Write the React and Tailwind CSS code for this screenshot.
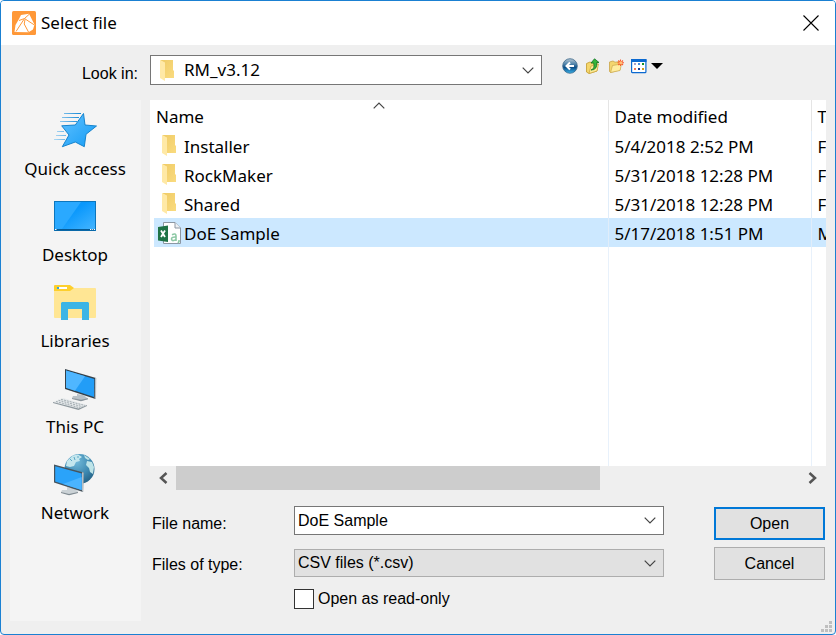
import React, { useState } from "react";

const ui = "font-['Noto_Sans','Segoe_UI',sans-serif]";

function AppLogo() {
  return (
    <svg width="24" height="24" viewBox="0 0 24 24" aria-hidden="true">
      <rect width="24" height="24" rx="1.5" fill="#ff9838" />
      <path d="M9 4 17 2.8 22.5 13.5 21 18.5 16.5 21.3 2.5 21 3.5 14 7 8Z" fill="#fff" />
      <path d="M7 9.5 12.5 7.5 17.5 3M12.5 7.5 17 10.5 22.5 14M12.5 7.5 4 20.5M13 8.5 12.2 13 16.5 21" fill="none" stroke="#ff9838" strokeWidth="1" />
    </svg>
  );
}

function FolderIcon() {
  return (
    <svg width="14" height="22" viewBox="0 0 14 22" className="shrink-0" aria-hidden="true">
      <defs>
        <linearGradient id="folderBack" x1="0" x2="1" y1="0" y2="1">
          <stop offset="0" stopColor="#efcb66" />
          <stop offset="1" stopColor="#fadb7f" />
        </linearGradient>
      </defs>
      <path d="M0 0H13V10L14 11V18H4V3Z" fill="url(#folderBack)" />
      <path d="M0 0 5 2.5V21L0 18Z" fill="#ffe9a6" />
    </svg>
  );
}

function CsvIcon() {
  return (
    <svg width="23" height="22" viewBox="0 0 23 22" className="shrink-0" aria-hidden="true">
      <path d="M5.5.5H17L22.5 6V21.5H5.5Z" fill="#fff" stroke="#8c97a3" />
      <path d="M17 .5V6H22.5" fill="#eef1f4" stroke="#8c97a3" />
      <path d="M0 5 10 3.5V20L0 18.5Z" fill="#1f7346" />
      <path d="M3 8.5 7 15M7 8.5 3 15" stroke="#fff" strokeWidth="1.8" />
      <path d="M14 12.7Q18 10.8 18 14V19M18 15Q13.3 14.7 13.5 17.2Q14 20 18 17.3M21 18V19.5L20 21" fill="none" stroke="#8cc8a4" strokeWidth="1.6" />
    </svg>
  );
}

function Chevron() {
  return (
    <svg width="12" height="7" viewBox="0 0 12 7" fill="none" aria-hidden="true">
      <path d="M.7.7 6 6 11.3.7" stroke="#444" strokeWidth="1.2" />
    </svg>
  );
}

function StarIcon() {
  return (
    <svg width="44" height="42" viewBox="0 0 44 42" aria-hidden="true">
      <defs>
        <linearGradient id="star" x1="0" x2="1" y1="0" y2="1">
          <stop offset="0" stopColor="#62c2ff" />
          <stop offset="1" stopColor="#139bf5" />
        </linearGradient>
        <linearGradient id="trail" gradientUnits="userSpaceOnUse" x1="0" x2="27" y1="0" y2="0">
          <stop offset="0" stopColor="#b5dcf5" />
          <stop offset="1" stopColor="#188ad6" />
        </linearGradient>
      </defs>
      <path d="M11 3.5H28M9 7.5H26M7 11.5H24M4 21.5H11M3 25.5H13M1 29.5H12" stroke="url(#trail)" strokeWidth="1" />
      <path d="M30.5 3.5 32 15 43.5 16 33 24.3 31.3 36.7 22.3 32 9.3 36.7 16 25 8.7 15.8 22.3 15Z" fill="url(#star)" stroke="#1683cc" strokeLinejoin="round" />
    </svg>
  );
}

function DesktopIcon() {
  return (
    <svg width="42" height="42" viewBox="0 0 42 42" aria-hidden="true">
      <defs>
        <linearGradient id="desk" x1="0" x2="1" y1="0" y2="1">
          <stop offset="0.4" stopColor="#0a98fc" />
          <stop offset="1" stopColor="#47b6ff" />
        </linearGradient>
      </defs>
      <rect x=".5" y="5.5" width="41" height="29" fill="url(#desk)" stroke="#0c76bd" />
      <path d="M1 6H27L8 33H1Z" fill="#2aa9ff" />
      <path d="M1 33H41V34.5H1Z" fill="#075a94" />
      <path d="M1 33.5H2.5M36 33.5H37.3M38.2 33.5H39.2M40 33.5H41" stroke="#fff" />
    </svg>
  );
}

function LibrariesIcon() {
  return (
    <svg width="42" height="42" viewBox="0 0 42 42" aria-hidden="true">
      <path d="M0 5H17L19 6H41Q42 6 42 7V35Q42 36 41 36H1Q0 36 0 35Z" fill="#ffe694" />
      <path d="M1 3H16L20 6 16 9H0V4Q0 3 1 3Z" fill="#fdcf2c" />
      <path d="M3 5H13V7H3Z" fill="#fff" />
      <path d="M3 5H5V7H3Z" fill="#32a8dc" />
      <path d="M8 20H34L35 21V38H28V27H14V38H7V21Z" fill="#3cb5e6" />
    </svg>
  );
}

function ComputerIcon() {
  return (
    <svg width="44" height="42" viewBox="-1 0 44 42" aria-hidden="true">
      <path d="M23 26 29 27 32 29 34 31 27 33 18 30 19 28 23 28Z" fill="#b9c1c7" />
      <path d="M18 30 27 31.7 34 30.3V31.3L27 33.3 18 31Z" fill="#8a949b" />
      <path d="M11 1 42 10 41.5 31 11 21Z" fill="#35414a" />
      <path d="M41 10 42.3 10 42 31 40.7 30.5Z" fill="#b7bfc4" />
      <path d="M12 2.6 40.3 11 40 29 12 19.8Z" fill="#229df7" />
      <path d="M12 2.6 31 8.3 21 22.8 12 19.8Z" fill="#4fb6ff" />
      <path d="M-1 34 9 30 33 37 24.5 41.5Z" fill="#e6eaec" />
      <path d="M-1 34 24.5 40.5 33 37V38L24.5 42-1 35Z" fill="#8e989e" />
      <path d="M2 33.5 26 39.8M4.5 32.3 28.5 38.7M7 31.3 31 37.5" stroke="#a3acb1" strokeWidth="1" strokeDasharray="2 1" />
    </svg>
  );
}

function NetworkIcon() {
  return (
    <svg width="42" height="42" viewBox="0 0 42 42" aria-hidden="true">
      <defs>
        <radialGradient id="globe" cx=".4" cy=".25" r=".8">
          <stop offset="0" stopColor="#72bada" />
          <stop offset=".6" stopColor="#3d88b0" />
          <stop offset="1" stopColor="#235f82" />
        </radialGradient>
      </defs>
      <circle cx="25.5" cy="15" r="15" fill="url(#globe)" />
      <path d="M13 7 19 1.5 24 .5 28 3 25 5 26 7 22 8 20 12 16 13 12 12Z" fill="#c4e7ee" />
      <path d="M30 1 36 5 34 6 31 4ZM33 7 38 8 40 13 39 20 36 18 35 14 32 11Z" fill="#bee4e8" />
      <path d="M16 5 18 7M20 3 21 6M24 2V4" stroke="#5ea6c4" />
      <path d="M13 33 19 34 24 37 23 39 15 41 7 38 8 36 13 36Z" fill="#cbd2d6" />
      <path d="M7 38 15 40 24 38V39L15 41.3 7 39Z" fill="#7f8a91" />
      <path d="M0 10.5 29.5 18.5 29 38 0 28.5Z" fill="#46545e" />
      <path d="M28 18.2 29.7 18.6 29.3 38 28 37.6Z" fill="#b7bfc4" />
      <path d="M1.2 12.3 27.7 19.5V36L1.2 27.5Z" fill="#2aa3fa" />
      <path d="M27.7 19.5 27.7 23 9 30 27.7 36Z" fill="#4ab4ff" />
    </svg>
  );
}

function BackIcon() {
  return (
    <svg width="16" height="16" viewBox="0 0 16 16" aria-hidden="true">
      <defs>
        <linearGradient id="back" x1="0" x2="0" y1="0" y2="1">
          <stop offset="0" stopColor="#b9c8d4" />
          <stop offset=".35" stopColor="#5587ac" />
          <stop offset=".6" stopColor="#0d4f88" />
          <stop offset="1" stopColor="#3ab4ec" />
        </linearGradient>
      </defs>
      <circle cx="8" cy="8" r="7.3" fill="url(#back)" stroke="#3e6a8c" strokeWidth=".8" />
      <path d="M12 8H5M8 4.5 4.5 8 8 11.5" fill="none" stroke="#fff" strokeWidth="2" />
    </svg>
  );
}

function UpIcon() {
  return (
    <svg width="16" height="16" viewBox="0 0 16 16" aria-hidden="true">
      <path d="M1.5 5.5 5 4 7 5 12 3.5V13L4 15.5 1.5 14Z" fill="#f5d66b" stroke="#c29a2d" strokeWidth=".8" />
      <path d="M4 15.5 6 8 13.5 6 12 13Z" fill="#ffeb98" stroke="#c9a23a" strokeWidth=".7" />
      <path d="M6 12Q10 11 8.7 5H6L9.5.8 14 4.5H11.7Q12.5 12 6 12Z" fill="#37b53c" stroke="#127522" strokeWidth=".8" />
    </svg>
  );
}

function NewFolderIcon() {
  return (
    <svg width="16" height="16" viewBox="0 0 16 16" aria-hidden="true">
      <path d="M1.5 4 5 3 7 4.2 12 3.5V12L2.5 14.5 1.5 13.5Z" fill="#f3d56e" stroke="#c9a449" strokeWidth=".8" />
      <path d="M2.5 14.5 4.5 7.5 13.5 6 12 12.5Z" fill="#ffed9f" stroke="#cca94f" strokeWidth=".7" />
      <path d="M12.5 1.5V8M9.5 4.8H16M10.3 2.5 15 7M15 2.5 10.3 7" stroke="#fa5a2b" strokeWidth="1.1" />
      <circle cx="12.7" cy="4.8" r="1.5" fill="#ffc27a" />
    </svg>
  );
}

function ViewIcon() {
  return (
    <svg width="16" height="16" viewBox="0 0 16 16" aria-hidden="true">
      <rect x=".6" y="1.6" width="14.3" height="13" rx=".5" fill="#fff" stroke="#0b69d0" strokeWidth="1.2" />
      <path d="M0 1H15.5V4H0Z" fill="#0b69d0" />
      <path d="M3 5H5V7H3Z" fill="#a8a0c8" />
      <path d="M7 5H9V7H7Z" fill="#478cdf" />
      <path d="M11 5H13V7H11Z" fill="#15902a" />
      <path d="M3 10H5V12H3Z" fill="#ef765a" />
      <path d="M7 10H9V12H7Z" fill="#143c91" />
      <path d="M11 10H13V12H11Z" fill="#d29a16" />
    </svg>
  );
}

const places = [
  ["Quick access", StarIcon],
  ["Desktop", DesktopIcon],
  ["Libraries", LibrariesIcon],
  ["This PC", ComputerIcon],
  ["Network", NetworkIcon],
];

const files = [
  ["Installer", "5/4/2018 2:52 PM", "File folder"],
  ["RockMaker", "5/31/2018 12:28 PM", "File folder"],
  ["Shared", "5/31/2018 12:28 PM", "File folder"],
  ["DoE Sample", "5/17/2018 1:51 PM", "Microsoft Excel Comma Separated Values File"],
];

function FileTable({ selected, onSelect }) {
  return (
    <div className="flex min-h-0 flex-1 overflow-hidden bg-white pl-1">
      <table className={`${ui} w-full table-fixed border-collapse text-left text-[17px] leading-6 whitespace-nowrap`}>
        <colgroup>
          <col />
          <col className="w-[203px]" />
          <col className="w-[15px]" />
        </colgroup>
        <thead>
          <tr className="h-[31px]">
            <th scope="col" className="relative p-0 pt-0.5 pl-0.5 font-normal">
              Name
              <span className="absolute top-0.5 left-1/2 -ml-2 flex rotate-180">
                <Chevron />
              </span>
            </th>
            <th scope="col" className="border-l border-[#e5e5e5] p-0 pt-0.5 pl-1.5 font-normal">Date modified</th>
            <th scope="col" className="overflow-hidden border-l border-[#e5e5e5] p-0 pt-0.5 pl-1.5 font-normal">Type</th>
          </tr>
        </thead>
        <tbody>
          {files.map(([name, date, type]) => (
            <tr key={name} onClick={() => onSelect(name)} className={name === selected ? "h-[29px] bg-[#cce8ff]" : "h-[29px]"}>
              <td className="p-0">
                <div className="flex items-center">
                  <span className="flex w-[30px] shrink-0 justify-center">
                    {type === "File folder" ? <FolderIcon /> : <CsvIcon />}
                  </span>
                  <span className="pt-0.5">{name}</span>
                </div>
              </td>
              <td className="border-l border-[#e0edfa] p-0 pt-0.5 pl-1.5">{date}</td>
              <td className="overflow-hidden border-l border-[#e0edfa] p-0 pt-0.5 pl-1.5">{type}</td>
            </tr>
          ))}
          <tr>
            <td className="p-0" />
            <td className="border-l border-[#e8f1fb] p-0" />
            <td className="border-l border-[#e8f1fb] p-0" />
          </tr>
        </tbody>
      </table>
    </div>
  );
}

function ScrollBar() {
  return (
    <div className="flex h-6 shrink-0">
      <button type="button" aria-label="Scroll left" className="flex w-[26px] items-center justify-center">
        <svg width="10" height="12" viewBox="0 0 10 12" fill="none"><path d="M8.5 1 3 6 8.5 11" stroke="#555" strokeWidth="2.5" /></svg>
      </button>
      <div className="flex-1">
        <div className="h-full w-[68%] bg-[#cdcdcd]" />
      </div>
      <button type="button" aria-label="Scroll right" className="flex w-[26px] items-center justify-center">
        <svg width="10" height="12" viewBox="0 0 10 12" fill="none"><path d="M1.5 1 7 6 1.5 11" stroke="#555" strokeWidth="2.5" /></svg>
      </button>
    </div>
  );
}

export default function App() {
  const [selected, setSelected] = useState("DoE Sample");
  const [readOnly, setReadOnly] = useState(false);

  return (
    <div className="flex h-screen min-h-[560px] flex-col overflow-hidden rounded-[4px] border border-[#1a80d2] bg-[#efefef] font-['Liberation_Sans',Arial,sans-serif] text-[16px] leading-5 text-black">
      <header className="flex h-11 shrink-0 items-center gap-[5px] bg-white pr-4 pl-[11px]">
        <AppLogo />
        <h1 className={`${ui} flex-1 text-[17px] leading-6`}>Select file</h1>
        <button type="button" aria-label="Close">
          <svg width="16" height="16" viewBox="0 0 16 16" fill="none"><path d="M.5.5 15.5 15.5M15.5.5.5 15.5" stroke="#000" strokeWidth="1.1" /></svg>
        </button>
      </header>

      <div className="flex shrink-0 items-start pt-2.5 pr-[9px]">
        <label htmlFor="look" className="w-[137px] pt-[9px] text-right">Look in:</label>
        <div className="relative ml-3 flex-1">
          <select id="look" className={`${ui} h-[30px] w-full appearance-none border border-[#767676] bg-white pl-[33px] text-[17px] leading-6`}>
            <option>RM_v3.12</option>
          </select>
          <span className="pointer-events-none absolute top-[5px] left-2.5"><FolderIcon /></span>
          <span className="pointer-events-none absolute top-3 right-2"><Chevron /></span>
        </div>
        <div className="ml-5 flex w-[264px] gap-[7px] pt-[3px]">
          <button type="button" aria-label="Back"><BackIcon /></button>
          <button type="button" aria-label="Up one level"><UpIcon /></button>
          <button type="button" aria-label="New folder"><NewFolderIcon /></button>
          <button type="button" aria-label="View menu" className="flex items-center gap-1">
            <ViewIcon />
            <svg width="12" height="6" viewBox="0 0 12 6"><path d="M0 0H12L6 6Z" /></svg>
          </button>
        </div>
      </div>

      <div className="flex min-h-0 flex-1 gap-[9px] pt-[15px] pr-[9px] pb-[13px] pl-[9px]">
        <nav aria-label="Places" className="flex w-[131px] shrink-0 flex-col gap-[15px] bg-[#f4f4f4] pt-2.5 pr-px">
          {places.map(([name, Icon]) => (
            <button type="button" key={name} className={`${ui} flex flex-col items-center gap-[5px] text-[17px] leading-6`}>
              <Icon />
              {name}
            </button>
          ))}
        </nav>

        <main className="flex min-w-0 flex-1 flex-col">
          <FileTable selected={selected} onSelect={setSelected} />
          <ScrollBar />

          <form className="flex shrink-0 justify-between pt-4 pr-px pb-3" onSubmit={(e) => e.preventDefault()}>
            <div className="grid w-[514px] grid-cols-[142px_1fr] pl-0.5">
              <label htmlFor="name" className="pt-2">File name:</label>
              <div className="relative mb-3.5">
                <input id="name" value={selected} onChange={(e) => setSelected(e.target.value)} className="block h-[29px] w-full border border-[#767676] bg-white pr-7 pl-[3px]" />
                <button type="button" aria-label="Show file names" className="absolute top-0 right-2 flex h-full items-center"><Chevron /></button>
              </div>
              <label htmlFor="type" className="pt-1.5">Files of type:</label>
              <div className="relative mb-3">
                <select id="type" className="block h-7 w-full appearance-none border border-[#adadad] bg-[#e1e1e1] pl-[3px]">
                  <option>CSV files (*.csv)</option>
                </select>
                <span className="pointer-events-none absolute top-0 right-2 flex h-full items-center"><Chevron /></span>
              </div>
              <div className="col-start-2 flex items-center gap-1">
                <input id="readonly" type="checkbox" checked={readOnly} onChange={(e) => setReadOnly(e.target.checked)} className="size-5 appearance-none border border-[#333] bg-white checked:bg-[#0078d7]" />
                <label htmlFor="readonly">Open as read-only</label>
              </div>
            </div>
            <div className="flex w-[111px] flex-col gap-[7px] pt-px">
              <button type="submit" className="h-[33px] border-2 border-[#0078d7] bg-[#e1e1e1]">Open</button>
              <button type="button" className="h-[33px] border border-[#adadad] bg-[#e1e1e1]">Cancel</button>
            </div>
          </form>
        </main>
      </div>

      <svg width="12" height="12" viewBox="0 0 12 12" fill="#bfbfbf" className="fixed right-1 bottom-[3px]" aria-hidden="true">
        <path d="M9 1H12V4H9ZM5 5H8V8H5ZM9 5H12V8H9ZM1 9H4V12H1ZM5 9H8V12H5ZM9 9H12V12H9Z" />
      </svg>
    </div>
  );
}
